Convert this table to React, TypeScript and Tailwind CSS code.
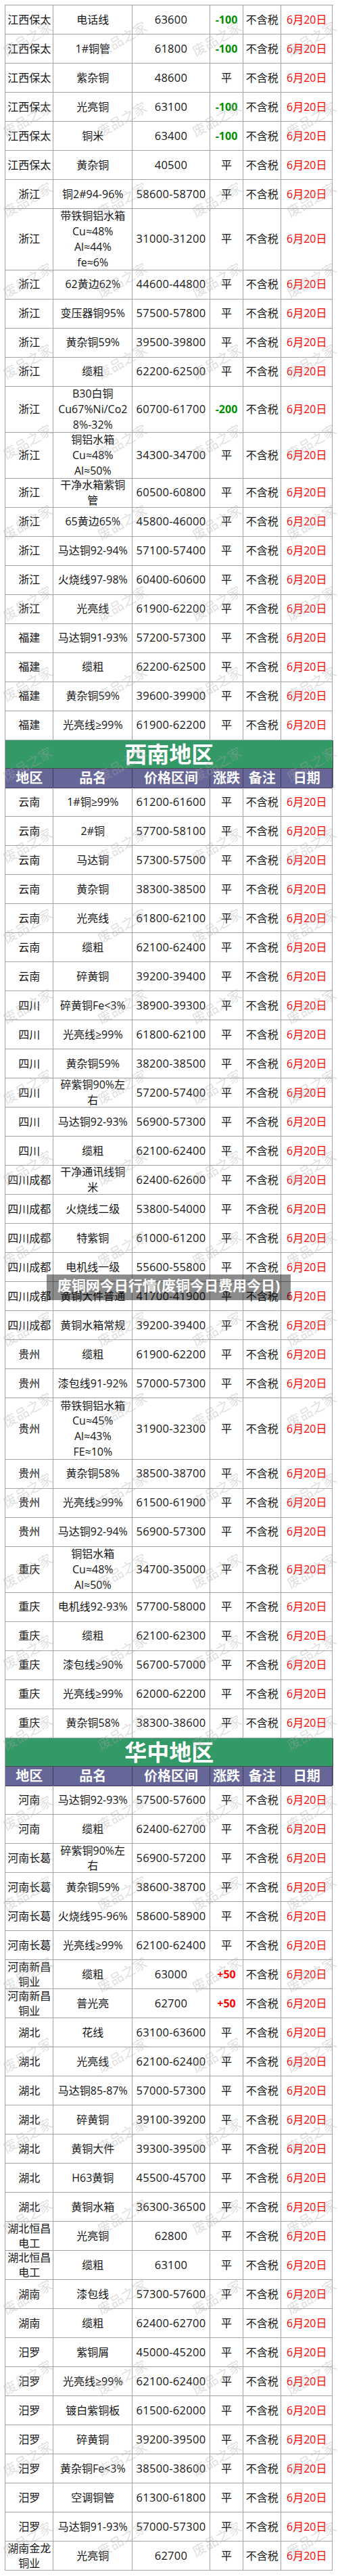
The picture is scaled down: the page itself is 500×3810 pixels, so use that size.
import React from "react";

type Row = { r: string; n: string; p: string; c?: string; h?: number };

const H3 = 68;
const H4 = 90.67;

const sec1: Row[] = [
  { r: "江西保太", n: "电话线", p: "63600", c: "-100" },
  { r: "江西保太", n: "1#铜管", p: "61800", c: "-100" },
  { r: "江西保太", n: "紫杂铜", p: "48600" },
  { r: "江西保太", n: "光亮铜", p: "63100", c: "-100" },
  { r: "江西保太", n: "铜米", p: "63400", c: "-100" },
  { r: "江西保太", n: "黄杂铜", p: "40500" },
  { r: "浙江", n: "铜2#94-96%", p: "58600-58700" },
  { r: "浙江", n: "带铁铜铝水箱\nCu≈48%\nAl≈44%\nfe≈6%", p: "31000-31200", h: H4 },
  { r: "浙江", n: "62黄边62%", p: "44600-44800" },
  { r: "浙江", n: "变压器铜95%", p: "57500-57800" },
  { r: "浙江", n: "黄杂铜59%", p: "39500-39800" },
  { r: "浙江", n: "缆粗", p: "62200-62500" },
  { r: "浙江", n: "B30白铜\nCu67%Ni/Co2\n8%-32%", p: "60700-61700", c: "-200", h: H3 },
  { r: "浙江", n: "铜铝水箱\nCu≈48%\nAl≈50%", p: "34300-34700", h: H3 },
  { r: "浙江", n: "干净水箱紫铜\n管", p: "60500-60800" },
  { r: "浙江", n: "65黄边65%", p: "45800-46000" },
  { r: "浙江", n: "马达铜92-94%", p: "57100-57400" },
  { r: "浙江", n: "火烧线97-98%", p: "60400-60600" },
  { r: "浙江", n: "光亮线", p: "61900-62200" },
  { r: "福建", n: "马达铜91-93%", p: "57200-57300" },
  { r: "福建", n: "缆粗", p: "62200-62500" },
  { r: "福建", n: "黄杂铜59%", p: "39600-39900" },
  { r: "福建", n: "光亮线≥99%", p: "61900-62200" },
];

const sec2: Row[] = [
  { r: "云南", n: "1#铜≥99%", p: "61200-61600" },
  { r: "云南", n: "2#铜", p: "57700-58100" },
  { r: "云南", n: "马达铜", p: "57300-57500" },
  { r: "云南", n: "黄杂铜", p: "38300-38500" },
  { r: "云南", n: "光亮线", p: "61800-62100" },
  { r: "云南", n: "缆粗", p: "62100-62400" },
  { r: "云南", n: "碎黄铜", p: "39200-39400" },
  { r: "四川", n: "碎黄铜Fe<3%", p: "38900-39300" },
  { r: "四川", n: "光亮线≥99%", p: "61800-62100" },
  { r: "四川", n: "黄杂铜59%", p: "38200-38500" },
  { r: "四川", n: "碎紫铜90%左\n右", p: "57200-57400" },
  { r: "四川", n: "马达铜92-93%", p: "56900-57300" },
  { r: "四川", n: "缆粗", p: "62100-62400" },
  { r: "四川成都", n: "干净通讯线铜\n米", p: "62400-62600" },
  { r: "四川成都", n: "火烧线二级", p: "53800-54000" },
  { r: "四川成都", n: "特紫铜", p: "61000-61200" },
  { r: "四川成都", n: "电机线一级", p: "55600-55800" },
  { r: "四川成都", n: "黄铜大件普通", p: "41700-41900" },
  { r: "四川成都", n: "黄铜水箱常规", p: "39200-39400" },
  { r: "贵州", n: "缆粗", p: "61900-62200" },
  { r: "贵州", n: "漆包线91-92%", p: "57000-57300" },
  { r: "贵州", n: "带铁铜铝水箱\nCu≈45%\nAl≈43%\nFE≈10%", p: "31900-32300", h: H4 },
  { r: "贵州", n: "黄杂铜58%", p: "38500-38700" },
  { r: "贵州", n: "光亮线≥99%", p: "61500-61900" },
  { r: "贵州", n: "马达铜92-94%", p: "56900-57300" },
  { r: "重庆", n: "铜铝水箱\nCu≈48%\nAl≈50%", p: "34700-35000", h: H3 },
  { r: "重庆", n: "电机线92-93%", p: "57700-58000" },
  { r: "重庆", n: "缆粗", p: "62100-62300" },
  { r: "重庆", n: "漆包线≥90%", p: "56700-57000" },
  { r: "重庆", n: "光亮线≥99%", p: "62000-62200" },
  { r: "重庆", n: "黄杂铜58%", p: "38300-38600" },
];

const sec3: Row[] = [
  { r: "河南", n: "马达铜92-93%", p: "57500-57600" },
  { r: "河南", n: "缆粗", p: "62400-62700" },
  { r: "河南长葛", n: "碎紫铜90%左\n右", p: "56900-57200" },
  { r: "河南长葛", n: "黄杂铜59%", p: "38600-38700" },
  { r: "河南长葛", n: "火烧线95-96%", p: "58600-58900" },
  { r: "河南长葛", n: "光亮线≥99%", p: "62100-62400" },
  { r: "河南新昌\n铜业", n: "缆粗", p: "63000", c: "+50" },
  { r: "河南新昌\n铜业", n: "普光亮", p: "62700", c: "+50" },
  { r: "湖北", n: "花线", p: "63100-63600" },
  { r: "湖北", n: "光亮线", p: "62100-62400" },
  { r: "湖北", n: "马达铜85-87%", p: "57000-57300" },
  { r: "湖北", n: "碎黄铜", p: "39100-39200" },
  { r: "湖北", n: "黄铜大件", p: "39300-39500" },
  { r: "湖北", n: "H63黄铜", p: "45500-45700" },
  { r: "湖北", n: "黄铜水箱", p: "36300-36500" },
  { r: "湖北恒昌\n电工", n: "光亮铜", p: "62800" },
  { r: "湖北恒昌\n电工", n: "缆粗", p: "63100" },
  { r: "湖南", n: "漆包线", p: "57300-57600" },
  { r: "湖南", n: "缆粗", p: "62400-62700" },
  { r: "汨罗", n: "紫铜屑", p: "45000-45200" },
  { r: "汨罗", n: "光亮线≥99%", p: "62100-62400" },
  { r: "汨罗", n: "镀白紫铜板", p: "61500-62000" },
  { r: "汨罗", n: "碎黄铜", p: "39200-39500" },
  { r: "汨罗", n: "黄杂铜Fe<3%", p: "38500-38600" },
  { r: "汨罗", n: "空调铜管", p: "61300-61800" },
  { r: "汨罗", n: "马达铜91-93%", p: "57000-57300" },
  { r: "湖南金龙\n铜业", n: "光亮铜", p: "62700" },
];

const cell =
  "flex items-center justify-center overflow-hidden text-center whitespace-pre leading-[22.67px] border-r border-b border-[#a3a3a3]";

function Change({ c }: { c?: string }) {
  if (!c) return <span>平</span>;
  if (c.startsWith("-")) return <span className="font-bold text-[#008f00]">{c}</span>;
  return <span className="font-bold text-[#ff0000]">{c}</span>;
}

function DataRow({ row }: { row: Row }) {
  const h = row.h ?? 43;
  return (
    <div
      className="grid grid-cols-[71.3px_117px_114.4px_49.6px_56px_76px]"
      style={{ height: h }}
    >
      <div className={cell}>{row.r}</div>
      <div className={cell}>{row.n}</div>
      <div className={`${cell} text-[16.5px] tracking-[0.3px]`}>{row.p}</div>
      <div className={cell}>
        <Change c={row.c} />
      </div>
      <div className={cell}>不含税</div>
      <div className={`${cell} text-[#ff0000]`}>6月20日</div>
    </div>
  );
}

function Title({ text }: { text: string }) {
  return (
    <>
      <div className="flex h-[42px] items-center justify-center border-r border-b border-[#4a4a4a] bg-[#339966] text-[33px] font-bold leading-none text-white">
        {text}
      </div>
      <div className="grid h-[28.5px] grid-cols-[71.3px_117px_114.4px_49.6px_56px_76px] bg-[#666699] text-[20px] font-bold leading-[28px] text-white">
        {["地区", "品名", "价格区间", "涨跌", "备注", "日期"].map((t) => (
          <div
            key={t}
            className="flex items-center justify-center border-r border-b border-[#3d3d55]"
          >
            {t}
          </div>
        ))}
      </div>
    </>
  );
}

export default function App() {
  const marks: React.ReactNode[] = [];
  for (let i = 0; i < 33; i++) {
    for (let j = 0; j < 4; j++) {
      marks.push(
        <span
          key={`${i}-${j}`}
          className="absolute -translate-x-1/2 -translate-y-1/2 -rotate-[30deg] whitespace-nowrap text-[20px] leading-none text-[rgba(170,170,170,0.38)]"
          style={{ left: 41 + 140 * j, top: 57.5 + 119.3 * i }}
        >
          废品之家
        </span>
      );
    }
  }

  return (
    <div className="relative h-[3810px] w-[500px] overflow-hidden bg-white font-['Open_Sans','Noto_Sans_CJK_SC',sans-serif] text-[16px] text-[#151515]">
      <div className="pl-[7px] pt-[7px]">
        <div className="w-[486.3px] border-l border-t border-[#a3a3a3]">
          {sec1.map((r, i) => (
            <DataRow key={`a${i}`} row={r} />
          ))}
          <Title text="西南地区" />
          {sec2.map((r, i) => (
            <DataRow key={`b${i}`} row={r} />
          ))}
          <Title text="华中地区" />
          {sec3.map((r, i) => (
            <DataRow key={`c${i}`} row={r} />
          ))}
        </div>
      </div>

      <div className="pointer-events-none absolute inset-0">{marks}</div>

      <div className="absolute left-[69px] top-[1885px] flex h-[38px] w-[361px] items-start justify-center bg-black/45 pt-[2px]">
        <span className="whitespace-nowrap text-[21px] font-bold leading-[28px] text-white">
          废铜网今日行情(废铜今日费用今日)
        </span>
      </div>
    </div>
  );
}
